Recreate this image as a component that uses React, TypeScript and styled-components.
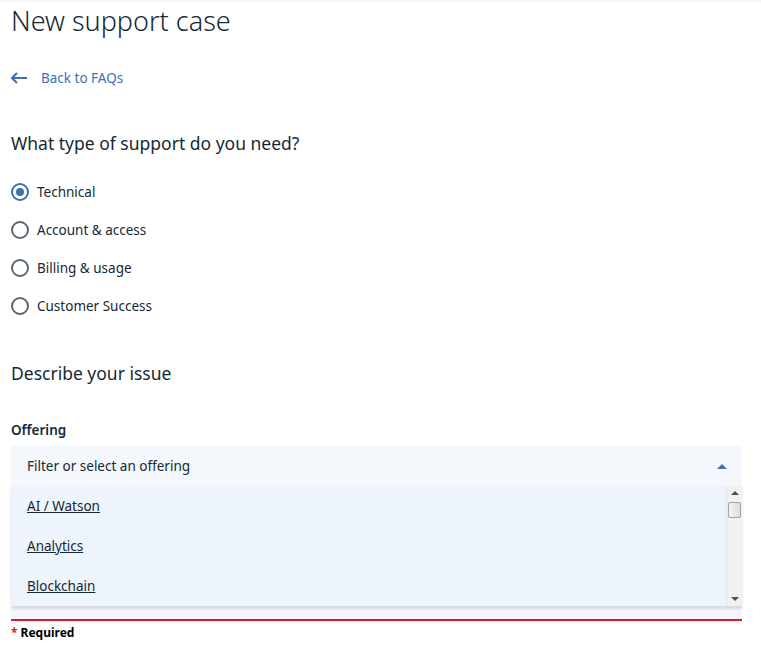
import React from 'react';
import styled, { createGlobalStyle } from 'styled-components';

const offerings = ['AI / Watson', 'Analytics', 'Blockchain'];

const supportTypes = ['Technical', 'Account & access', 'Billing & usage', 'Customer Success'];

const GlobalStyle = createGlobalStyle`
  html, body {
    margin: 0;
    padding: 0;
    background: #ffffff;
  }
  body {
    font-family: 'Noto Sans', 'Liberation Sans', sans-serif;
    color: #152935;
  }
`;

const Page = styled.div`
  padding: 3px 19px 16px 11px;
  box-shadow: inset 0 4px 4px -3px rgba(0, 0, 0, 0.06);
  min-height: 649px;
  box-sizing: border-box;
`;

const Title = styled.h1`
  margin: 0;
  font-size: 27px;
  line-height: 36px;
  font-weight: 300;
  color: #152935;
`;

const BackLink = styled.a`
  display: flex;
  align-items: center;
  gap: 14px;
  margin-top: 29px;
  height: 20px;
  font-size: 13.5px;
  color: #3d70b2;
  text-decoration: none;
`;

const Heading = styled.h2<{ $top: number }>`
  margin: ${p => p.$top}px 0 0;
  font-size: 17.5px;
  line-height: 24px;
  font-weight: 400;
  color: #152935;
`;

const RadioGroup = styled.div`
  display: flex;
  flex-direction: column;
  gap: 18px;
  margin-top: 27px;
`;

const RadioRow = styled.label`
  display: flex;
  align-items: center;
  gap: 8px;
  height: 20px;
  font-size: 13.5px;
  color: #152935;
`;

const RadioDot = styled.span<{ $checked: boolean }>`
  width: 18px;
  height: 18px;
  box-sizing: border-box;
  border-radius: 50%;
  border: 2px solid ${p => (p.$checked ? '#3d70b2' : '#5a6872')};
  display: flex;
  align-items: center;
  justify-content: center;
  &::after {
    content: '';
    width: 8px;
    height: 8px;
    border-radius: 50%;
    background: ${p => (p.$checked ? '#3d70b2' : 'transparent')};
  }
`;

const Label = styled.div`
  margin-top: 36px;
  font-size: 13.5px;
  line-height: 18px;
  font-weight: 600;
  color: #152935;
`;

const Field = styled.div`
  margin-top: 7px;
  background: #f4f7fb;
  border-bottom: 2px solid #e0182d;
  padding-bottom: 13px;
`;

const InputRow = styled.div`
  display: flex;
  align-items: center;
  justify-content: space-between;
  height: 40px;
  padding: 0 15px 0 16px;
  font-size: 13.5px;
  color: #152935;
`;

const Menu = styled.div`
  display: flex;
  height: 120px;
  background: #eef4fc;
  box-shadow: 0 3px 3px rgba(0, 0, 0, 0.12);
`;

const MenuList = styled.ul`
  flex: 1;
  list-style: none;
  margin: 0;
  padding: 0;
  overflow: hidden;
`;

const MenuItem = styled.li`
  height: 40px;
  display: flex;
  align-items: center;
  padding-left: 16px;
  font-size: 13.5px;
  color: #152935;
  text-decoration: underline;
`;

const ScrollTrack = styled.div`
  width: 15px;
  display: flex;
  flex-direction: column;
  align-items: center;
  background: #f1f1f1;
  border-left: 1px solid #e6e6e6;
`;

const ScrollArrow = styled.div<{ $down?: boolean }>`
  height: 14px;
  width: 100%;
  display: flex;
  align-items: center;
  justify-content: center;
  &::before {
    content: '';
    border-left: 4px solid transparent;
    border-right: 4px solid transparent;
    ${p =>
      p.$down
        ? 'border-top: 4px solid #505050;'
        : 'border-bottom: 4px solid #505050;'}
  }
`;

const ScrollThumb = styled.div`
  width: 13px;
  height: 16px;
  margin-top: 2px;
  box-sizing: border-box;
  border: 1px solid #a3a3a3;
  border-radius: 2px;
  background: linear-gradient(to right, #f4f4f4, #dcdcdc);
`;

const ScrollSpacer = styled.div`
  flex: 1;
`;

const Footer = styled.div`
  margin-top: 4px;
  font-size: 12px;
  line-height: 16px;
  font-weight: 700;
  color: #000;
  span {
    color: #e0182d;
    margin-right: 3px;
  }
`;

export default function App() {
  return (
    <Page>
      <GlobalStyle />
      <Title>New support case</Title>
      <BackLink href="#">
        <svg width="16" height="12" viewBox="0 0 16 12" fill="none">
          <path d="M6 1 L1 6 L6 11 M1 6 H16" stroke="#3d70b2" strokeWidth="2" />
        </svg>
        Back to FAQs
      </BackLink>
      <Heading $top={43}>What type of support do you need?</Heading>
      <RadioGroup>
        {supportTypes.map((t, i) => (
          <RadioRow key={t}>
            <RadioDot $checked={i === 0} />
            {t}
          </RadioRow>
        ))}
      </RadioGroup>
      <Heading $top={45}>Describe your issue</Heading>
      <Label>Offering</Label>
      <Field>
        <InputRow>
          Filter or select an offering
          <svg width="10" height="5" viewBox="0 0 10 5">
            <path d="M0 5 L5 0 L10 5 Z" fill="#3d70b2" />
          </svg>
        </InputRow>
        <Menu>
          <MenuList>
            {offerings.map(o => (
              <MenuItem key={o}>{o}</MenuItem>
            ))}
          </MenuList>
          <ScrollTrack>
            <ScrollArrow />
            <ScrollThumb />
            <ScrollSpacer />
            <ScrollArrow $down />
          </ScrollTrack>
        </Menu>
      </Field>
      <Footer>
        <span>*</span>Required
      </Footer>
    </Page>
  );
}
